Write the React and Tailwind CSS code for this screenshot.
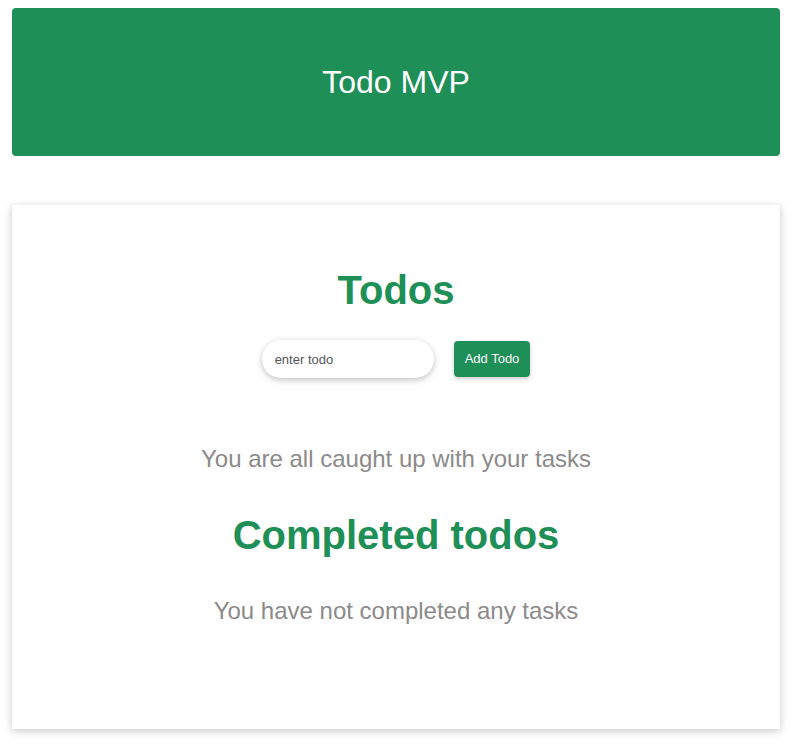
import React, { useState } from 'react';

const App = () => {
  const [todo, setTodo] = useState('');

  return (
    <div className="min-h-screen bg-white pt-[8px] pb-[16px] font-['Liberation_Sans',Arial,sans-serif]">
      {/* Header */}
      <div className="ml-[12px] w-[768px] h-[148px] rounded-[4px] bg-[#1d8f57] flex items-center justify-center">
        <h1 className="text-[32px] text-white leading-none">Todo MVP</h1>
      </div>

      {/* Card */}
      <div className="ml-[12px] mt-[49px] w-[768px] h-[524px] bg-white shadow-[0_2px_8px_rgba(0,0,0,0.22)] flex flex-col items-center pt-[65px]">
        <h2 className="text-[40px] font-bold text-[#1d8f57] leading-none">Todos</h2>

        <div className="mt-[30px] flex items-center gap-[20px]">
          <input
            value={todo}
            onChange={(e) => setTodo(e.target.value)}
            placeholder="enter todo"
            className="w-[172px] h-[38px] rounded-full bg-white px-[13px] text-[13px] text-[#333] placeholder:text-[#555] outline-none shadow-[0_2px_6px_rgba(0,0,0,0.25)]"
          />
          <button className="h-[36px] px-[11px] rounded-[4px] bg-[#1d8f57] text-white text-[13px] shadow-[0_2px_5px_rgba(0,0,0,0.2)]">
            Add Todo
          </button>
        </div>

        <p className="mt-[69px] text-[24px] text-[#8c8a8a] leading-none">You are all caught up with your tasks</p>

        <h2 className="mt-[44px] text-[40px] font-bold text-[#1d8f57] leading-none">Completed todos</h2>

        <p className="mt-[44px] text-[24px] text-[#8c8a8a] leading-none">You have not completed any tasks</p>
      </div>
    </div>
  );
};

export default App;
